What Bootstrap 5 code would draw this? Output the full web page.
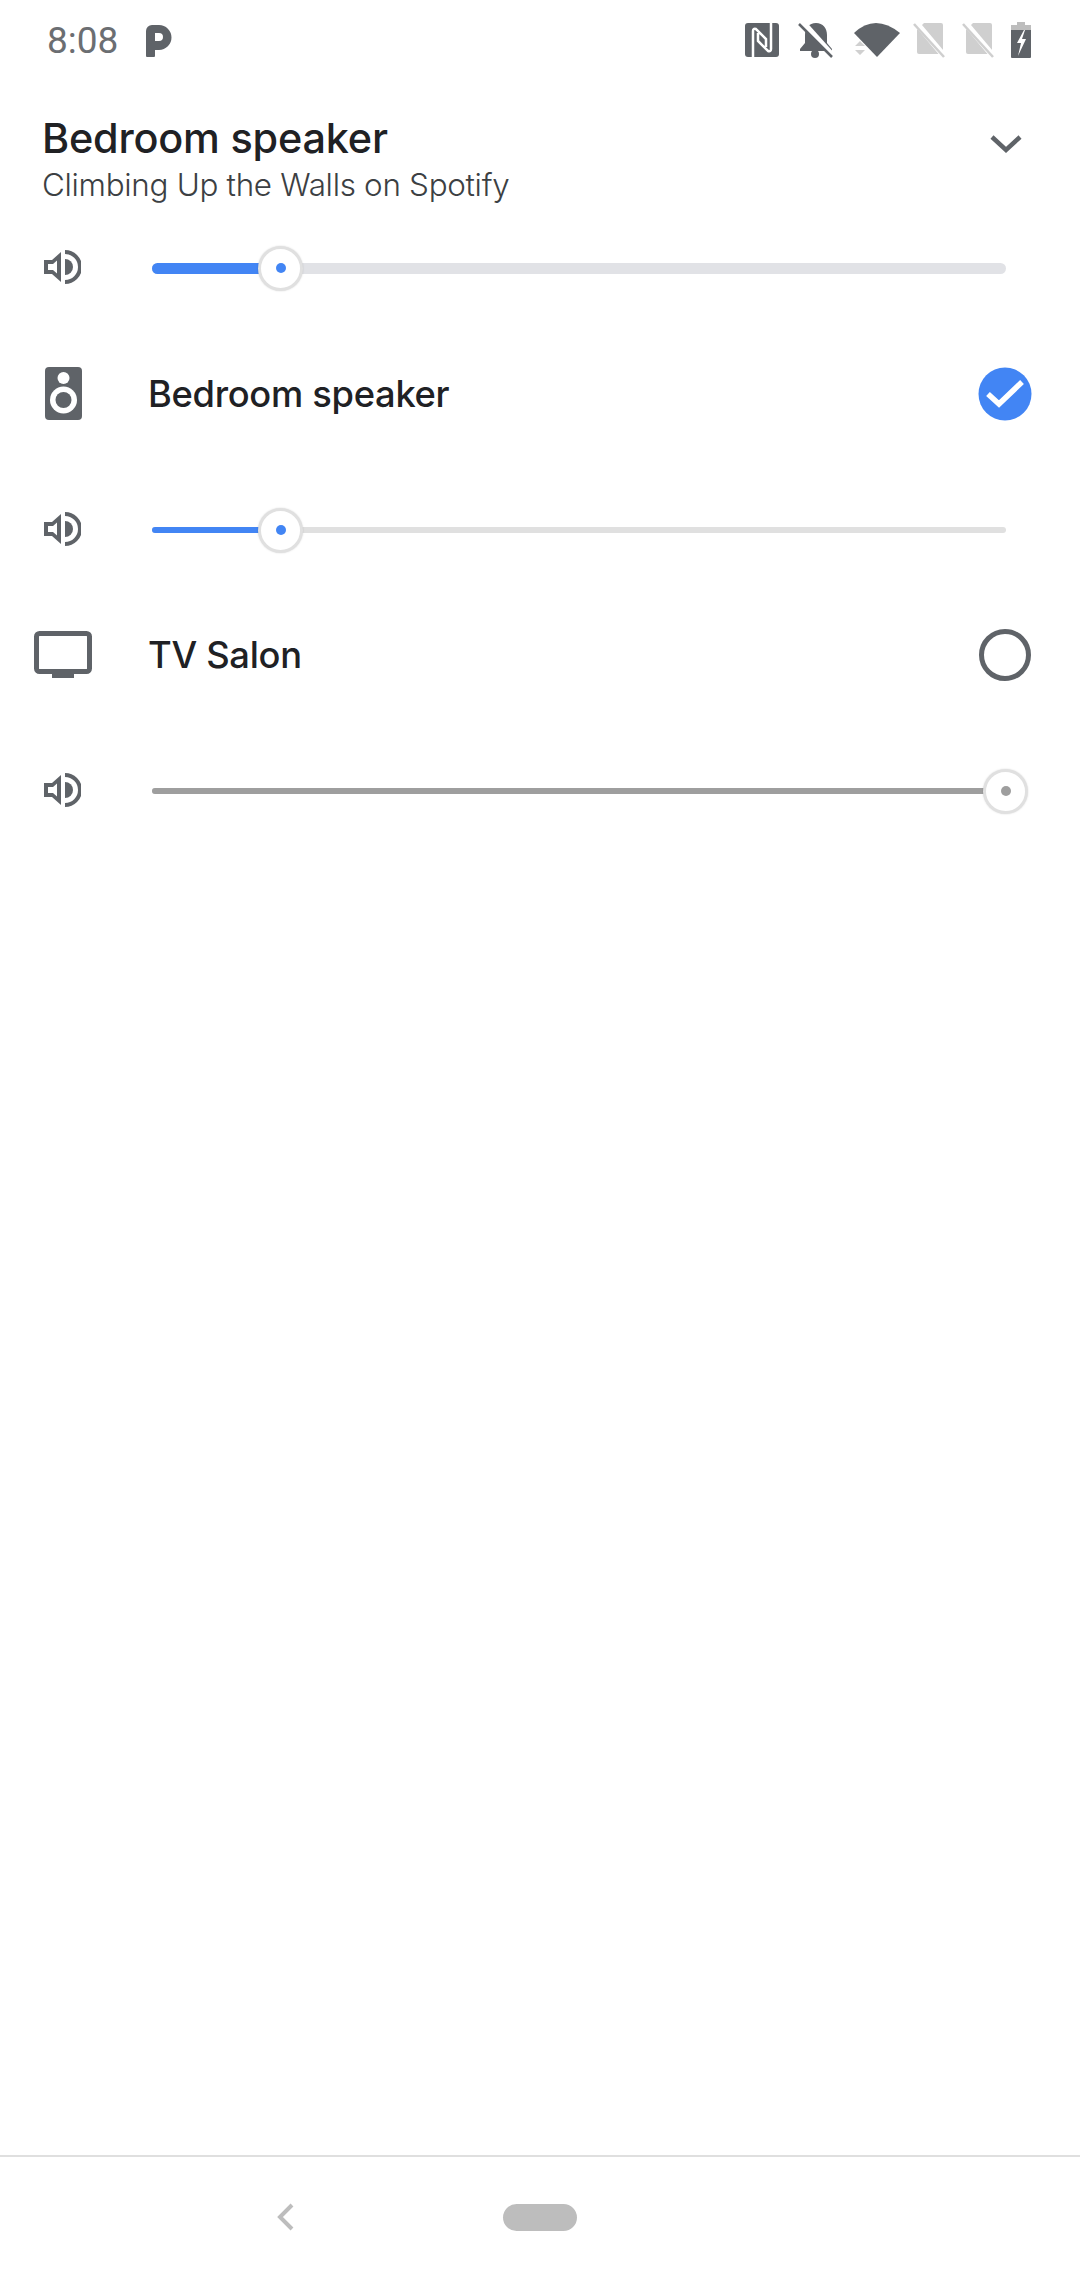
<!DOCTYPE html>
<html lang="en">
<head>
  <meta charset="UTF-8" />
  <meta name="viewport" content="width=device-width, initial-scale=1.0"/>
  <title>Output switcher</title>
  <link href="https://cdn.jsdelivr.net/npm/bootstrap@5.3.0/dist/css/bootstrap.min.css" rel="stylesheet">
  <style>
    body { background: #fff; font-family: "Inter", "Liberation Sans", sans-serif; color: #202124; }
    .status-bar { height: 80px; padding: 0 49px 0 47px; }
    .clock { font-family: "Roboto", sans-serif; font-size: 37px; color: #6b6e72; line-height: 1; margin-right: 26px; }
    .status-icons { gap: 17px; }
    .nfc-icon { margin-right: 2px; }
    .wifi-icon { margin-right: -5px; }
    .media-head { height: 142px; padding: 30px 0 0 42px; }
    .media-title { font-size: 41.4px; font-weight: 500; line-height: 56px; margin: 0; letter-spacing: -.2px; }
    .media-sub { font-size: 31.4px; font-weight: 300; line-height: 38px; color: #3c4043; margin: 0; letter-spacing: -.3px; }
    .head-chevron { position: absolute; right: 58px; top: 54px; }
    .vol-row { height: 90px; }
    .vol-icon { width: 152px; padding-left: 44px; }
    .vol-track { position: relative; width: 854px; top: 1px; }
    .vol-track .progress { height: 6px; background: #e0e0e0; border-radius: 3px; }
    .vol-track.thick .progress { height: 11px; border-radius: 6px; background: #e1e2e6; }
    .vol-track .progress-bar { background: #4285f4; }
    .vol-track.off .progress-bar { background: #9e9e9e; }
    .vol-thumb { position: absolute; top: 50%; width: 45px; height: 45px; margin: -22.5px 0 0 -22px; border-radius: 50%;
      background: #fff; border: 3px solid #e0e0e0; box-shadow: 0 0 2px rgba(0, 0, 0, .15);
      display: flex; align-items: center; justify-content: center; }
    .vol-thumb span { width: 10px; height: 10px; border-radius: 50%; background: #4285f4; }
    .off .vol-thumb span { background: #9e9e9e; }
    .device-row { height: 100px; margin: 32px 0 40px; padding-right: 48px; }
    .device-row.second { margin-top: 31px; }
    .device-icon { width: 148px; padding-left: 34px; }
    .speaker-icon { margin-left: 10px; }
    .device-name { font-size: 36.3px; font-weight: 450; letter-spacing: -.3px; color: #202124; }
    .nav-bottom { height: 125px; border-top: 2px solid #dfdfdf; position: relative; }
    .nav-back { position: absolute; left: 275px; top: 45px; }
    .nav-home { position: absolute; left: 503px; top: 47px; width: 74px; height: 27px; border-radius: 14px; background: #bdbdbd; }
  </style>
</head>
<body class="d-flex flex-column min-vh-100">

  <div class="status-bar d-flex align-items-center">
    <span class="clock">8:08</span>
    <svg width="28" height="33" viewBox="0 0 28 33"><path fill="#5f6368" fill-rule="evenodd" d="M2 7a6 6 0 0 1 6-6h7a12.5 12.5 0 0 1 0 25h-4v6a1 1 0 0 1-1 1H3a1 1 0 0 1-1-1zM11 9v8h4a4 4 0 0 0 0-8z"/></svg>
    <div class="status-icons d-flex align-items-center ms-auto">
      <!-- nfc -->
      <svg class="nfc-icon" width="34" height="34" viewBox="0 0 34 34"><rect width="34" height="34" rx="3" fill="#5f6368"/><path fill="none" stroke="#fff" stroke-width="2.5" d="M8 34V8q0-3 3-2l10 10v8M26 0v26q0 3-3 2L13 18v-8"/></svg>
      <!-- bell off -->
      <svg width="36" height="36" viewBox="0 0 36 36"><path fill="#5f6368" d="M18 1c7 0 11 5 11 12v8l5 6v2H2v-2l5-6v-8C7 6 11 1 18 1z"/><circle cx="17" cy="32" r="4" fill="#5f6368"/><path stroke="#fff" stroke-width="5.5" d="M3-2l33 37"/><path stroke="#5f6368" stroke-width="2.5" d="M1 2l33 33"/></svg>
      <!-- wifi -->
      <svg class="wifi-icon" width="50" height="36" viewBox="0 0 50 36"><path fill="#5f6368" d="M3 11Q24-9 49 11L26 35z"/><path fill="#d0d0d0" d="M4 24l5-5 5 5zM4 28h10l-5 5z"/></svg>
      <!-- sim slots -->
      <svg width="32" height="36" viewBox="0 0 32 36"><path fill="#cfcfcf" d="M4 8l7-7h17a2 2 0 0 1 2 2v27a2 2 0 0 1-2 2H6a2 2 0 0 1-2-2z"/><path stroke="#fff" stroke-width="6" d="M0-3l32 38"/><path stroke="#cfcfcf" stroke-width="2.5" d="M1 2l30 33"/></svg>
      <svg width="32" height="36" viewBox="0 0 32 36"><path fill="#cfcfcf" d="M4 8l7-7h17a2 2 0 0 1 2 2v27a2 2 0 0 1-2 2H6a2 2 0 0 1-2-2z"/><path stroke="#fff" stroke-width="6" d="M0-3l32 38"/><path stroke="#cfcfcf" stroke-width="2.5" d="M1 2l30 33"/></svg>
      <!-- battery -->
      <svg width="20" height="36" viewBox="0 0 20 36"><path fill="#bdbdbd" d="M6 0h8v3h6v8H0V3h6z"/><path fill="#5f6368" d="M0 8h20v27a1 1 0 0 1-1 1H1a1 1 0 0 1-1-1z"/><path fill="#fff" d="M13 8L6 21h4l-3 13 8-17h-4l3-9z"/></svg>
    </div>
  </div>

  <div class="media-head position-relative">
    <p class="media-title">Bedroom speaker</p>
    <p class="media-sub">Climbing Up the Walls on Spotify</p>
    <svg class="head-chevron" width="32" height="20" viewBox="0 0 32 20"><path fill="none" stroke="#5f6368" stroke-width="4.5" d="M2 3l14 13L30 3"/></svg>
  </div>

  <div class="vol-row d-flex align-items-center">
    <div class="vol-icon"><svg width="37" height="34" viewBox="0 0 37 34"><use href="#speakerVol"/></svg></div>
    <div class="vol-track thick">
      <div class="progress"><div class="progress-bar" style="width: 15%"></div></div>
      <div class="vol-thumb" style="left: 128px"><span></span></div>
    </div>
  </div>

  <div class="device-row d-flex align-items-center">
    <div class="device-icon"><svg class="speaker-icon d-block" width="39" height="54" viewBox="0 0 39 54"><rect x="1" width="37" height="53" rx="4" fill="#5f6368"/><circle cx="19.5" cy="11" r="6" fill="#fff"/><circle cx="19.5" cy="33" r="13.5" fill="#fff"/><circle cx="19.5" cy="33" r="8" fill="#5f6368"/></svg></div>
    <span class="device-name">Bedroom speaker</span>
    <svg class="ms-auto" width="54" height="54" viewBox="0 0 54 54"><circle cx="27" cy="27" r="26.5" fill="#4285f4"/><path fill="none" stroke="#fff" stroke-width="5.5" d="M10 27l11 10L44 15"/></svg>
  </div>

  <div class="vol-row d-flex align-items-center">
    <div class="vol-icon"><svg width="37" height="34" viewBox="0 0 37 34"><use href="#speakerVol"/></svg></div>
    <div class="vol-track">
      <div class="progress"><div class="progress-bar" style="width: 15%"></div></div>
      <div class="vol-thumb" style="left: 128px"><span></span></div>
    </div>
  </div>

  <div class="device-row second d-flex align-items-center">
    <div class="device-icon"><svg class="d-block" width="58" height="48" viewBox="0 0 58 48"><rect x="2.5" y="2.5" width="53" height="38" rx="3" fill="none" stroke="#5f6368" stroke-width="5"/><rect x="18" y="40" width="22" height="7" fill="#5f6368"/></svg></div>
    <span class="device-name">TV Salon</span>
    <svg class="ms-auto" width="54" height="54" viewBox="0 0 54 54"><circle cx="27" cy="27" r="23.5" fill="none" stroke="#5f6368" stroke-width="5"/></svg>
  </div>

  <div class="vol-row d-flex align-items-center">
    <div class="vol-icon"><svg width="37" height="34" viewBox="0 0 37 34"><use href="#speakerVol"/></svg></div>
    <div class="vol-track off">
      <div class="progress"><div class="progress-bar" style="width: 100%"></div></div>
      <div class="vol-thumb" style="left: 853px"><span></span></div>
    </div>
  </div>

  <div class="nav-bottom mt-auto">
    <svg class="nav-back" width="20" height="30" viewBox="0 0 20 30"><path fill="none" stroke="#bdbdbd" stroke-width="4" d="M17 3L5 15l12 12"/></svg>
    <div class="nav-home"></div>
  </div>

  <svg width="0" height="0" class="position-absolute">
    <symbol id="speakerVol" viewBox="0 0 37 34">
      <path fill="#5f6368" d="M0 10h8l9-8v30l-9-8H0z"/>
      <path fill="#fff" d="M4 14h5l4-3.5v13L9 20H4z"/>
      <path fill="#5f6368" d="M21 9a8 8 0 0 1 0 16z"/>
      <path fill="none" stroke="#5f6368" stroke-width="4" d="M21 2a15 15 0 0 1 0 30"/>
    </symbol>
  </svg>

  <script src="https://cdn.jsdelivr.net/npm/bootstrap@5.3.0/dist/js/bootstrap.bundle.min.js"></script>
</body>
</html>
